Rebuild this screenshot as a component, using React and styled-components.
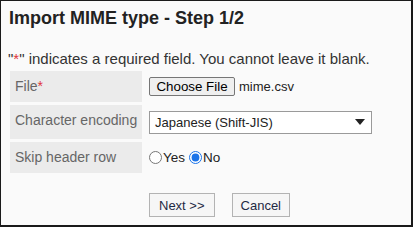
import React from "react";
import styled, {createGlobalStyle} from "styled-components";

const GlobalStyle = createGlobalStyle`
  html, body {
    margin: 0;
    padding: 0;
    background: #fff;
  }
  body {
    font-family: "Liberation Sans", Arial, sans-serif;
  }
`

const Frame = styled.div`
  box-sizing: border-box;
  width: 413px;
  height: 227px;
  border-style: solid;
  border-color: #1a1a1a;
  border-width: 1px 2px 2px 1px;
  background: #fafafa;
  padding: 7px 0 0 7px;
  color: #333;
`

const Title = styled.h1`
  margin: 0 0 0 1px;
  font-size: 18px;
  line-height: 20px;
  font-weight: bold;
  color: #222;
`

const Notice = styled.p`
  margin: 22px 0 0 0;
  font-size: 15px;
  line-height: 17px;
  color: #333;
`

const Required = styled.span`
  color: #e0353b;
`

const Form = styled.div`
  display: grid;
  grid-template-columns: 132px 1fr;
  column-gap: 3px;
  row-gap: 3px;
  margin: 4px 0 0 2px;
`

const Label = styled.div`
  height: ${p => p.$h}px;
  padding: 7px 0 0 5px;
  box-sizing: border-box;
  background: #ebebeb;
  color: #666;
  font-size: 14px;
  line-height: 16px;
`

const Value = styled.div`
  display: flex;
  align-items: center;
  gap: 4px;
  padding-left: 4px;
  font-size: 13px;
  color: #222;
`

const FileButton = styled.button`
  box-sizing: border-box;
  height: 19px;
  width: 86px;
  padding: 0;
  border: 1px solid #767676;
  border-radius: 2px;
  background: #efefef;
  font-family: inherit;
  font-size: 13.33px;
  color: #000;
`

const Select = styled.div`
  box-sizing: border-box;
  display: flex;
  align-items: center;
  justify-content: space-between;
  width: 223px;
  height: 23px;
  padding: 0 6px 0 5px;
  border: 1px solid #9a9a9a;
  background: #fff;
  font-size: 13px;
  color: #222;
`

const RadioLabel = styled.label`
  display: flex;
  align-items: center;
  font-size: 13.5px;
  color: #222;
`

const Radio = styled.input`
  width: 13px;
  height: 13px;
  margin: 0 1px 0 0;
  accent-color: #1a73e8;
`

const Actions = styled.div`
  display: flex;
  gap: 17px;
  margin: 20px 0 0 141px;
`

const Button = styled.button`
  box-sizing: border-box;
  height: 24px;
  padding: 0 ${p => p.$pad}px;
  border: 1px solid #b3b3b3;
  border-radius: 0;
  background: #f6f6f6;
  font-family: inherit;
  font-size: 13px;
  color: #1f2a44;
`

const Arrow = () => (
    <svg width="10" height="6" viewBox="0 0 10 6">
        <path d="M0 0 H10 L5 6 Z" fill="#222"/>
    </svg>
)

const App = () => {
    return (
        <>
            <GlobalStyle/>
            <Frame>
                <Title>Import MIME type - Step 1/2</Title>
                <Notice>"<Required>*</Required>" indicates a required field. You cannot leave it blank.</Notice>
                <Form>
                    <Label $h={31}>File<Required>*</Required></Label>
                    <Value>
                        <FileButton>Choose File</FileButton>
                        <span>mime.csv</span>
                    </Value>
                    <Label $h={34}>Character encoding</Label>
                    <Value>
                        <Select>
                            <span>Japanese (Shift-JIS)</span>
                            <Arrow/>
                        </Select>
                    </Value>
                    <Label $h={31}>Skip header row</Label>
                    <Value>
                        <RadioLabel><Radio type="radio" name="skip"/>Yes</RadioLabel>
                        <RadioLabel><Radio type="radio" name="skip" defaultChecked/>No</RadioLabel>
                    </Value>
                </Form>
                <Actions>
                    <Button $pad={9}>Next &gt;&gt;</Button>
                    <Button $pad={8}>Cancel</Button>
                </Actions>
            </Frame>
        </>
    );
}

export default App;
